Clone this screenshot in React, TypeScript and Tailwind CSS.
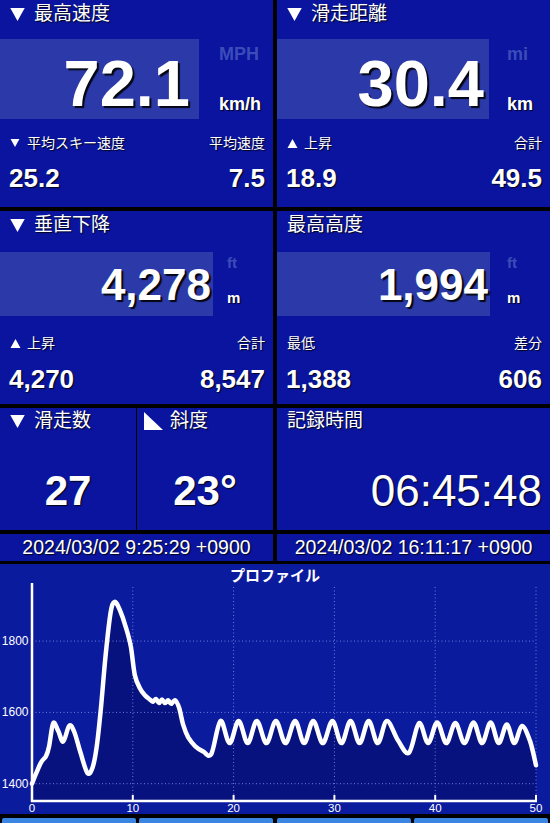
import React from 'react';

const CELL = 'bg-[#0a149f]';
const BOX = 'bg-[#2c3aa9]';
const SHADOW = '[text-shadow:1px_1px_1px_rgba(0,0,0,0.85)]';
const BIG_SHADOW = '[text-shadow:2px_2px_1px_rgba(0,0,0,0.9)]';

const Down = ({ w, h }: { w: number; h: number }) => (
  <svg width={w} height={h} viewBox="0 0 10 9" className="shrink-0">
    <polygon points="0,0 10,0 5,9" fill="white" />
  </svg>
);

const Up = ({ w, h }: { w: number; h: number }) => (
  <svg width={w} height={h} viewBox="0 0 10 9" className="shrink-0">
    <polygon points="0,9 10,9 5,0" fill="white" />
  </svg>
);

const Slope = () => (
  <svg width={19} height={18} viewBox="0 0 19 18" className="shrink-0">
    <polygon points="0,0 19,18 0,18" fill="white" />
  </svg>
);

// x = km, y = elevation (m)
const osc = (peaks: number[], vals: number[], trough: number) => {
  const out: [number, number][] = [];
  peaks.forEach((p, i) => {
    out.push([p, vals[i]]);
    if (i < peaks.length - 1) out.push([(p + peaks[i + 1]) / 2, trough]);
  });
  return out;
};

const profile: [number, number][] = [
  [0, 1400], [0.4, 1428], [0.9, 1460], [1.4, 1478], [1.7, 1505], [2.1, 1570],
  [2.6, 1548], [3.1, 1518], [3.7, 1563], [4.2, 1545], [4.8, 1488], [5.5, 1430],
  [6.0, 1445], [6.4, 1500], [6.8, 1600], [7.3, 1760], [7.8, 1880], [8.2, 1910],
  [8.7, 1888], [9.3, 1840], [9.8, 1785], [10.2, 1705], [10.7, 1668], [11.2, 1648],
  [11.7, 1636], [12.0, 1630], [12.3, 1638], [12.6, 1626], [12.9, 1636], [13.2, 1626],
  [13.5, 1634], [13.8, 1624], [14.2, 1634], [14.6, 1612], [15.0, 1565], [15.5, 1530],
  [16.2, 1505], [17.0, 1490], [17.8, 1484],
  ...osc([18.7, 20.5, 22.3, 24.2, 26.1, 27.9, 29.8, 31.6, 33.4, 35.2], Array(10).fill(1576), 1514),
  [36.3, 1522], [37.4, 1487],
  ...osc([38.4, 40.2, 42.0, 43.8, 45.5, 47.1, 48.6], [1570, 1572, 1570, 1572, 1572, 1566, 1562], 1514),
  [49.4, 1520], [50, 1452],
];

const xu = (u: number) => 32 + u * 10.08;
const yv = (v: number) => 219.7 - (v - 1400) * 0.3565;

function smoothPath(pts: [number, number][]) {
  let d = `M${pts[0][0].toFixed(1)},${pts[0][1].toFixed(1)}`;
  for (let i = 0; i < pts.length - 1; i++) {
    const p0 = pts[i - 1] || pts[i];
    const p1 = pts[i];
    const p2 = pts[i + 1];
    const p3 = pts[i + 2] || p2;
    const c1x = p1[0] + (p2[0] - p0[0]) / 6;
    const c1y = p1[1] + (p2[1] - p0[1]) / 6;
    const c2x = p2[0] - (p3[0] - p1[0]) / 6;
    const c2y = p2[1] - (p3[1] - p1[1]) / 6;
    d += ` C${c1x.toFixed(1)},${c1y.toFixed(1)} ${c2x.toFixed(1)},${c2y.toFixed(1)} ${p2[0].toFixed(1)},${p2[1].toFixed(1)}`;
  }
  return d;
}

const ProfileChart = () => {
  const pts = profile.map(([u, v]) => [xu(u), yv(v)] as [number, number]);
  const line = smoothPath(pts);
  const area = `${line} L${pts[pts.length - 1][0]},237 L${pts[0][0]},237 Z`;
  const ticks = [10, 20, 30, 40, 50];
  return (
    <svg width={550} height={250} viewBox="0 0 550 250" className="block">
      <text x={275} y={16.5} textAnchor="middle" fill="white" fontSize={15} fontWeight={700}
        fontFamily="'Noto Sans CJK JP', sans-serif">プロファイル</text>
      <path d={area} fill="#07127f" />
      {ticks.map(t => (
        <line key={t} x1={xu(t)} x2={xu(t)} y1={23} y2={237} stroke="#6a80de" strokeWidth={1} strokeDasharray="1 2.5" />
      ))}
      {[1400, 1600, 1800].map(v => (
        <line key={v} x1={32} x2={536} y1={yv(v)} y2={yv(v)} stroke="#6a80de" strokeWidth={1} strokeDasharray="1 2.5" />
      ))}
      <path d={line} fill="none" stroke="white" strokeWidth={4.5} strokeLinejoin="round" strokeLinecap="round" />
      <path d="M32,19 L32,238 M31,237 L537,237" stroke="white" strokeWidth={2.5} fill="none" />
      {ticks.map(t => (
        <line key={t} x1={xu(t)} x2={xu(t)} y1={237} y2={231} stroke="white" strokeWidth={2} />
      ))}
      {[1400, 1600, 1800].map(v => (
        <text key={v} x={28.5} y={yv(v) + 4} textAnchor="end" fill="white" fontSize={12}
          fontFamily="'Liberation Sans', sans-serif">{v}</text>
      ))}
      {[0, ...ticks].map(t => (
        <text key={t} x={xu(t)} y={247.5} textAnchor="middle" fill="white" fontSize={11.5}
          fontFamily="'Liberation Sans', sans-serif">{t}</text>
      ))}
    </svg>
  );
};

type Sub = { icon?: 'down' | 'up'; left: string; right: string; a: string; b: string };

const SubRows = ({ sub, h }: { sub: Sub; h: string }) => (
  <>
    <div className={`${h} flex items-center justify-between pl-[10px] pr-[8px] text-[14px] leading-none text-white ${SHADOW}`}>
      <div className="flex items-center">
        {sub.icon === 'down' && <span className="mr-[7px]"><Down w={10} h={8} /></span>}
        {sub.icon === 'up' && <span className="mr-[6px]"><Up w={11} h={9} /></span>}
        <span>{sub.left}</span>
      </div>
      <span>{sub.right}</span>
    </div>
    <div className={`flex justify-between pl-[9px] pr-[8px] text-[26px] font-bold leading-none text-white ${SHADOW}`}>
      <span>{sub.a}</span>
      <span>{sub.b}</span>
    </div>
  </>
);

const Header = ({ title, down }: { title: string; down?: boolean }) => (
  <div className={`flex items-center pl-[10px] text-[19px] leading-[20px] text-white ${SHADOW}`}>
    {down && <span className="mr-[9px]"><Down w={15} h={13} /></span>}
    <span>{title}</span>
  </div>
);

const App: React.FC = () => {
  return (
    <div className="w-[550px] h-[823px] overflow-hidden bg-black font-['Liberation_Sans','Noto_Sans_CJK_JP',sans-serif] flex flex-col">
      {/* row 1 */}
      <div className="grid grid-cols-[273px_273px] gap-x-[4px] h-[207px] shrink-0">
        <div className={`${CELL} flex flex-col`}>
          <div className="h-[39px] pt-[4px]"><Header title="最高速度" down /></div>
          <div className="h-[80px] flex">
            <div className={`${BOX} w-[199px] flex items-end justify-end pr-[9px] pb-[3px]`}>
              <span className={`text-[65px] font-bold leading-none text-white ${BIG_SHADOW}`}>72.1</span>
            </div>
            <div className="flex flex-col pl-[20px] text-[18px] font-bold leading-none">
              <span className="mt-[6px] text-[#3b4cb8]">MPH</span>
              <span className={`mt-[32px] text-white ${SHADOW}`}>km/h</span>
            </div>
          </div>
          <SubRows h="h-[46px] pt-[2px]" sub={{ icon: 'down', left: '平均スキー速度', right: '平均速度', a: '25.2', b: '7.5' }} />
        </div>
        <div className={`${CELL} flex flex-col`}>
          <div className="h-[39px] pt-[4px]"><Header title="滑走距離" down /></div>
          <div className="h-[80px] flex">
            <div className={`${BOX} w-[212px] flex items-end justify-end pr-[5px] pb-[3px]`}>
              <span className={`text-[65px] font-bold leading-none text-white ${BIG_SHADOW}`}>30.4</span>
            </div>
            <div className="flex flex-col pl-[18px] text-[18px] font-bold leading-none">
              <span className="mt-[6px] text-[#3b4cb8]">mi</span>
              <span className={`mt-[32px] text-white ${SHADOW}`}>km</span>
            </div>
          </div>
          <SubRows h="h-[46px] pt-[2px]" sub={{ icon: 'up', left: '上昇', right: '合計', a: '18.9', b: '49.5' }} />
        </div>
      </div>

      {/* row 2 */}
      <div className="mt-[4px] grid grid-cols-[273px_273px] gap-x-[4px] h-[193px] shrink-0">
        <div className={`${CELL} flex flex-col`}>
          <div className="h-[41px] pt-[4px]"><Header title="垂直下降" down /></div>
          <div className="h-[64px] flex">
            <div className={`${BOX} w-[213px] flex items-end justify-end pr-[2px] pb-[9px]`}>
              <span className={`text-[44px] font-bold leading-none text-white ${BIG_SHADOW}`}>4,278</span>
            </div>
            <div className="flex flex-col pl-[14px] text-[15px] font-bold leading-none">
              <span className="mt-[3px] text-[#3b4cb8]">ft</span>
              <span className={`mt-[20px] text-white ${SHADOW}`}>m</span>
            </div>
          </div>
          <SubRows h="h-[50px] pt-[4px]" sub={{ icon: 'up', left: '上昇', right: '合計', a: '4,270', b: '8,547' }} />
        </div>
        <div className={`${CELL} flex flex-col`}>
          <div className="h-[41px] pt-[4px]"><Header title="最高高度" /></div>
          <div className="h-[64px] flex">
            <div className={`${BOX} w-[213px] flex items-end justify-end pr-[2px] pb-[9px]`}>
              <span className={`text-[44px] font-bold leading-none text-white ${BIG_SHADOW}`}>1,994</span>
            </div>
            <div className="flex flex-col pl-[17px] text-[15px] font-bold leading-none">
              <span className="mt-[3px] text-[#3b4cb8]">ft</span>
              <span className={`mt-[20px] text-white ${SHADOW}`}>m</span>
            </div>
          </div>
          <SubRows h="h-[50px] pt-[4px]" sub={{ left: '最低', right: '差分', a: '1,388', b: '606' }} />
        </div>
      </div>

      {/* row 3 */}
      <div className="mt-[4px] grid grid-cols-[273px_273px] gap-x-[4px] h-[122px] shrink-0">
        <div className="grid grid-cols-[136px_136px] gap-x-[1px]">
          <div className={`${CELL} flex flex-col`}>
            <div className="h-[40px] pt-[3px]"><Header title="滑走数" down /></div>
            <div className={`mt-[22px] text-center text-[42px] font-bold leading-none text-white ${SHADOW}`}>27</div>
          </div>
          <div className={`${CELL} flex flex-col`}>
            <div className="h-[40px] pt-[3px]">
              <div className={`flex items-center pl-[7px] text-[19px] leading-[20px] text-white ${SHADOW}`}>
                <span className="mr-[7px]"><Slope /></span>
                <span>斜度</span>
              </div>
            </div>
            <div className={`mt-[22px] text-center text-[42px] font-bold leading-none text-white ${SHADOW}`}>23°</div>
          </div>
        </div>
        <div className={`${CELL} flex flex-col`}>
          <div className="h-[40px] pt-[3px]"><Header title="記録時間" /></div>
          <div className={`mt-[21px] pr-[8px] text-right text-[44px] leading-none text-white ${SHADOW}`}>06:45:48</div>
        </div>
      </div>

      {/* dates */}
      <div className={`mt-[4px] grid grid-cols-[273px_273px] gap-x-[4px] h-[27px] shrink-0 text-[19.5px] leading-[27px] text-white text-center ${SHADOW}`}>
        <div className={CELL}>2024/03/02 9:25:29 +0900</div>
        <div className={CELL}>2024/03/02 16:11:17 +0900</div>
      </div>

      {/* chart */}
      <div className="mt-[3px] h-[250px] shrink-0 bg-[#0b1b9d]">
        <ProfileChart />
      </div>

      {/* toolbar */}
      <div className="mt-[4px] flex px-[2px] h-[10px] shrink-0">
        <div className="w-[134px] bg-[#3a86e2] rounded-t-[2px]" />
        <div className="ml-[3px] w-[134px] bg-[#3a86e2] rounded-t-[2px]" />
        <div className="ml-[4px] w-[134px] bg-[#3a86e2] rounded-t-[2px]" />
        <div className="ml-[3px] w-[134px] bg-[#3a86e2] rounded-t-[2px]" />
      </div>
    </div>
  );
};

export default App;
